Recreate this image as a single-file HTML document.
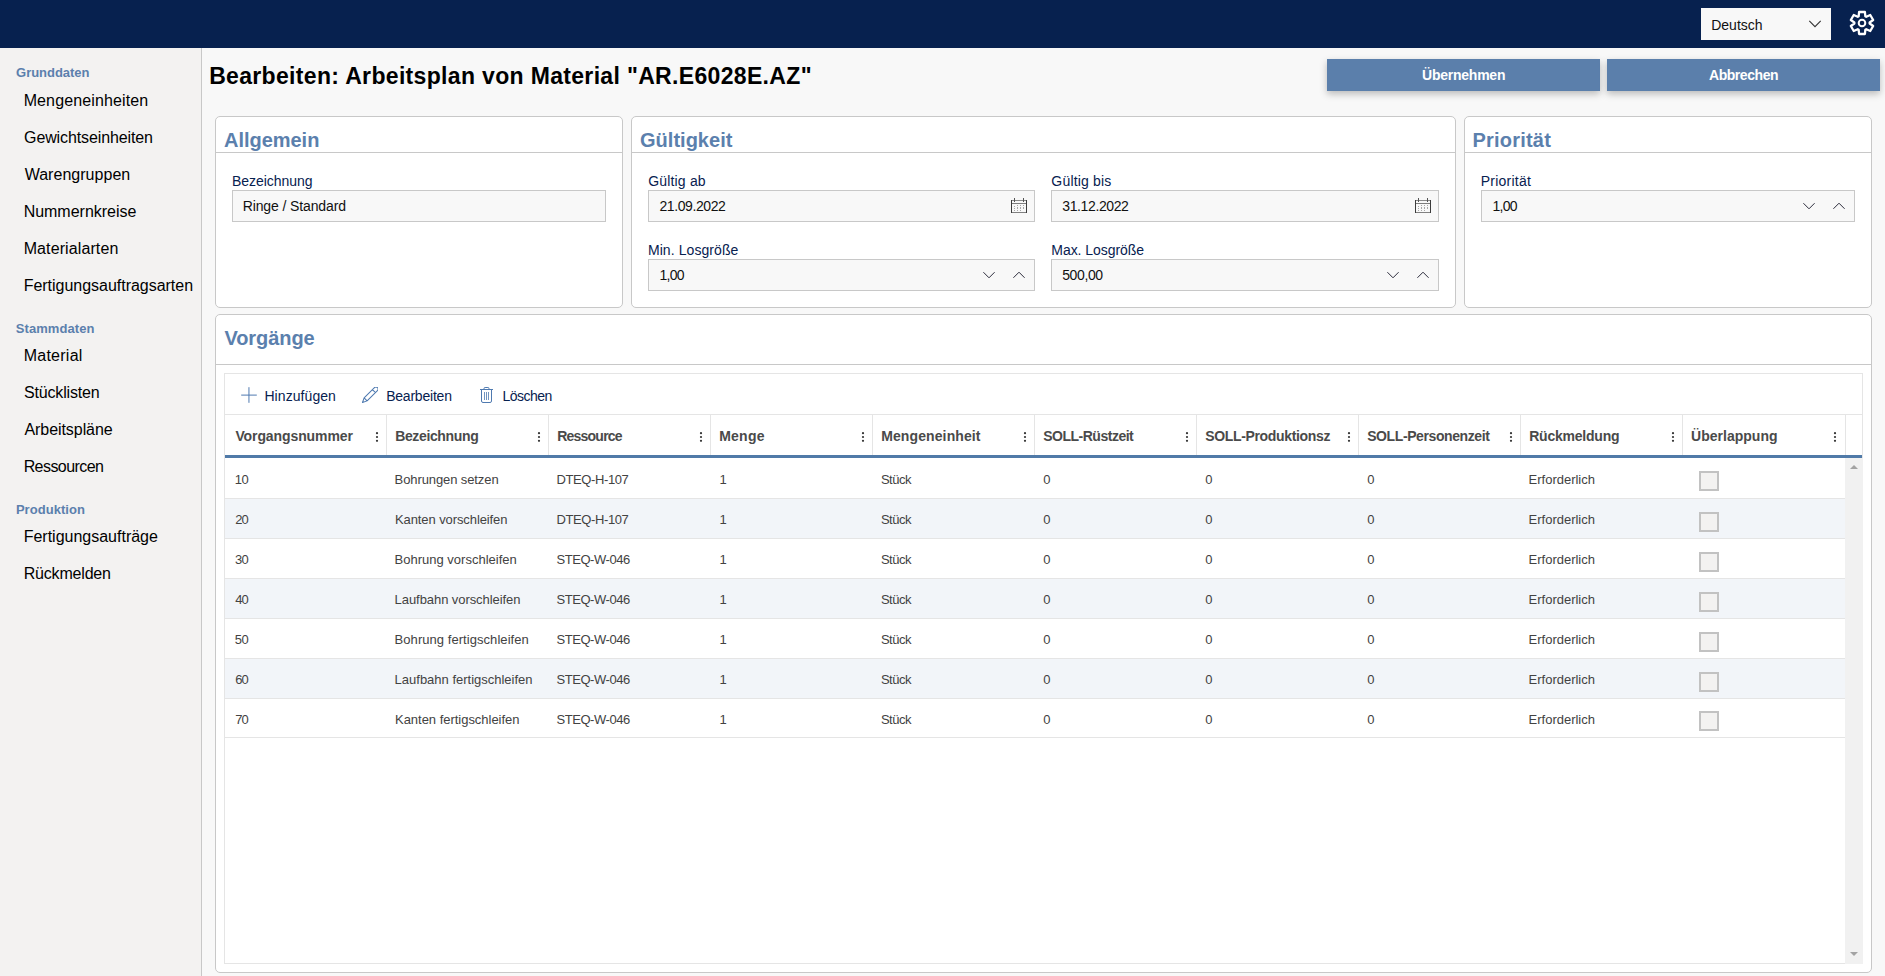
<!DOCTYPE html>
<html lang="de"><head><meta charset="utf-8"><title>Bearbeiten: Arbeitsplan</title>
<style>
html,body{margin:0;padding:0}
body{width:1885px;height:976px;overflow:hidden;position:relative;background:#f8f8f8;font-family:"Liberation Sans",Arial,sans-serif;}
.t{position:absolute;white-space:nowrap;line-height:1;}
</style></head><body>
<div style="position:absolute;left:0px;top:0px;width:1885px;height:48px;background:#07214f;"></div>
<div style="position:absolute;left:1701px;top:8px;width:130px;height:32px;background:#f8f8f8;"></div>
<svg style="position:absolute;left:1808px;top:19px" width="14" height="10" viewBox="0 0 14 10"><path d="M1.3 1.9 L7 7.7 L12.7 1.9" fill="none" stroke="#333" stroke-width="1.1"/></svg>
<svg style="position:absolute;left:1862.2px;top:23px;overflow:visible" width="1" height="1"><path d="M3.35 -6.74 L2.91 -11.00 L-2.91 -11.00 L-3.35 -6.74 A7.65 7.50 0 0 0 -4.28 -6.22 L-8.26 -7.97 L-11.17 -3.03 L-7.63 -0.52 A7.65 7.50 0 0 0 -7.63 0.52 L-11.17 3.03 L-8.26 7.97 L-4.28 6.22 A7.65 7.50 0 0 0 -3.35 6.74 L-2.91 11.00 L2.91 11.00 L3.35 6.74 A7.65 7.50 0 0 0 4.28 6.22 L8.26 7.97 L11.17 3.03 L7.63 0.52 A7.65 7.50 0 0 0 7.63 -0.52 L11.17 -3.03 L8.26 -7.97 L4.28 -6.22 A7.65 7.50 0 0 0 3.35 -6.74Z" fill="none" stroke="#fff" stroke-width="2.3" stroke-linejoin="round"/><circle cx="0" cy="0" r="3.3" fill="none" stroke="#fff" stroke-width="2"/></svg>
<div style="position:absolute;left:0px;top:48px;width:201px;height:928px;background:#f3f2f1;border-right:1px solid #c8c8c8;"></div>
<div style="position:absolute;left:1327px;top:59px;width:273px;height:32px;background:#5b7fab;box-shadow:0 3px 7px rgba(0,0,0,.25);"></div>
<div style="position:absolute;left:1607px;top:59px;width:273px;height:32px;background:#5b7fab;box-shadow:0 3px 7px rgba(0,0,0,.25);"></div>
<div style="position:absolute;left:215px;top:116px;width:408px;height:192px;box-sizing:border-box;background:#fff;border:1px solid #c8c8c8;border-radius:5px;"><div style="position:absolute;left:0px;top:35px;width:406px;height:1px;background:#c8c8c8;"></div></div>
<div style="position:absolute;left:631px;top:116px;width:825px;height:192px;box-sizing:border-box;background:#fff;border:1px solid #c8c8c8;border-radius:5px;"><div style="position:absolute;left:0px;top:35px;width:823px;height:1px;background:#c8c8c8;"></div></div>
<div style="position:absolute;left:1464px;top:116px;width:408px;height:192px;box-sizing:border-box;background:#fff;border:1px solid #c8c8c8;border-radius:5px;"><div style="position:absolute;left:0px;top:35px;width:406px;height:1px;background:#c8c8c8;"></div></div>
<div style="position:absolute;left:215px;top:314px;width:1657px;height:659px;box-sizing:border-box;background:#fff;border:1px solid #c8c8c8;border-radius:5px;"><div style="position:absolute;left:0px;top:49px;width:1655px;height:1px;background:#c8c8c8;"></div></div>
<div style="position:absolute;left:232px;top:190px;width:374px;height:32px;box-sizing:border-box;background:#f8f8f8;border:1px solid #c8c8c8;"></div>
<div style="position:absolute;left:648px;top:190px;width:387px;height:32px;box-sizing:border-box;background:#f8f8f8;border:1px solid #c8c8c8;"></div>
<svg style="position:absolute;left:1011px;top:198px" width="16" height="16" viewBox="0 0 16 16" shape-rendering="crispEdges"><rect x="0" y="2" width="16" height="1" fill="#8a8a8a"/><rect x="0" y="5" width="16" height="1" fill="#7c7c7c"/><rect x="0" y="14" width="16" height="1" fill="#808080"/><rect x="0" y="2" width="1" height="13" fill="#3c3c3c"/><rect x="15" y="2" width="1" height="13" fill="#3c3c3c"/><rect x="3" y="0.4" width="1" height="3.2" fill="#555"/><rect x="12" y="0.4" width="1" height="3.2" fill="#555"/><g fill="#a8a8a8"><rect x="3" y="8" width="1" height="1"/><rect x="3" y="10" width="1" height="1"/><rect x="3" y="12" width="1" height="1"/><rect x="6" y="7" width="1" height="1"/><rect x="6" y="8.5" width="1" height="1"/><rect x="6" y="10" width="1" height="1"/><rect x="6" y="12" width="1" height="1"/><rect x="9" y="7" width="1" height="1"/><rect x="9" y="8.5" width="1" height="1"/><rect x="9" y="10" width="1" height="1"/><rect x="9" y="12" width="1" height="1"/><rect x="12" y="7" width="1" height="1"/><rect x="12" y="8.5" width="1" height="1"/><rect x="12" y="10" width="1" height="1"/></g></svg>
<div style="position:absolute;left:1051px;top:190px;width:388px;height:32px;box-sizing:border-box;background:#f8f8f8;border:1px solid #c8c8c8;"></div>
<svg style="position:absolute;left:1415px;top:198px" width="16" height="16" viewBox="0 0 16 16" shape-rendering="crispEdges"><rect x="0" y="2" width="16" height="1" fill="#8a8a8a"/><rect x="0" y="5" width="16" height="1" fill="#7c7c7c"/><rect x="0" y="14" width="16" height="1" fill="#808080"/><rect x="0" y="2" width="1" height="13" fill="#3c3c3c"/><rect x="15" y="2" width="1" height="13" fill="#3c3c3c"/><rect x="3" y="0.4" width="1" height="3.2" fill="#555"/><rect x="12" y="0.4" width="1" height="3.2" fill="#555"/><g fill="#a8a8a8"><rect x="3" y="8" width="1" height="1"/><rect x="3" y="10" width="1" height="1"/><rect x="3" y="12" width="1" height="1"/><rect x="6" y="7" width="1" height="1"/><rect x="6" y="8.5" width="1" height="1"/><rect x="6" y="10" width="1" height="1"/><rect x="6" y="12" width="1" height="1"/><rect x="9" y="7" width="1" height="1"/><rect x="9" y="8.5" width="1" height="1"/><rect x="9" y="10" width="1" height="1"/><rect x="9" y="12" width="1" height="1"/><rect x="12" y="7" width="1" height="1"/><rect x="12" y="8.5" width="1" height="1"/><rect x="12" y="10" width="1" height="1"/></g></svg>
<div style="position:absolute;left:648px;top:259px;width:387px;height:32px;box-sizing:border-box;background:#f8f8f8;border:1px solid #c8c8c8;"></div>
<svg style="position:absolute;left:988.8px;top:275px;overflow:visible" width="1" height="1"><path d="M-5.6 -2.8 L0 2.8 L5.6 -2.8" fill="none" stroke="#2c2c3c" stroke-width="1"/></svg>
<svg style="position:absolute;left:1018.8px;top:275px;overflow:visible" width="1" height="1"><path d="M-5.6 2.8 L0 -2.8 L5.6 2.8" fill="none" stroke="#2c2c3c" stroke-width="1"/></svg>
<div style="position:absolute;left:1051px;top:259px;width:388px;height:32px;box-sizing:border-box;background:#f8f8f8;border:1px solid #c8c8c8;"></div>
<svg style="position:absolute;left:1393.25px;top:275px;overflow:visible" width="1" height="1"><path d="M-5.6 -2.8 L0 2.8 L5.6 -2.8" fill="none" stroke="#2c2c3c" stroke-width="1"/></svg>
<svg style="position:absolute;left:1423.25px;top:275px;overflow:visible" width="1" height="1"><path d="M-5.6 2.8 L0 -2.8 L5.6 2.8" fill="none" stroke="#2c2c3c" stroke-width="1"/></svg>
<div style="position:absolute;left:1481px;top:190px;width:374px;height:32px;box-sizing:border-box;background:#f8f8f8;border:1px solid #c8c8c8;"></div>
<svg style="position:absolute;left:1809.35px;top:206px;overflow:visible" width="1" height="1"><path d="M-5.6 -2.8 L0 2.8 L5.6 -2.8" fill="none" stroke="#2c2c3c" stroke-width="1"/></svg>
<svg style="position:absolute;left:1839.35px;top:206px;overflow:visible" width="1" height="1"><path d="M-5.6 2.8 L0 -2.8 L5.6 2.8" fill="none" stroke="#2c2c3c" stroke-width="1"/></svg>
<div style="position:absolute;left:224px;top:373px;width:1639px;height:591px;box-sizing:border-box;background:#fff;border:1px solid #e5e5e5;"></div>
<div style="position:absolute;left:225px;top:414px;width:1637px;height:1px;background:#e5e5e5;"></div>
<div style="position:absolute;left:225px;top:455px;width:1637px;height:3px;background:#507aa8;"></div>
<div style="position:absolute;left:386px;top:415px;width:1px;height:40px;background:#e5e5e5;"></div>
<svg style="position:absolute;left:374.8px;top:432px" width="4" height="10" viewBox="0 0 4 10"><circle cx="2" cy="1.2" r="1.1" fill="#333"/><circle cx="2" cy="5" r="1.1" fill="#333"/><circle cx="2" cy="8.8" r="1.1" fill="#333"/></svg>
<div style="position:absolute;left:548px;top:415px;width:1px;height:40px;background:#e5e5e5;"></div>
<svg style="position:absolute;left:536.8px;top:432px" width="4" height="10" viewBox="0 0 4 10"><circle cx="2" cy="1.2" r="1.1" fill="#333"/><circle cx="2" cy="5" r="1.1" fill="#333"/><circle cx="2" cy="8.8" r="1.1" fill="#333"/></svg>
<div style="position:absolute;left:710px;top:415px;width:1px;height:40px;background:#e5e5e5;"></div>
<svg style="position:absolute;left:698.8px;top:432px" width="4" height="10" viewBox="0 0 4 10"><circle cx="2" cy="1.2" r="1.1" fill="#333"/><circle cx="2" cy="5" r="1.1" fill="#333"/><circle cx="2" cy="8.8" r="1.1" fill="#333"/></svg>
<div style="position:absolute;left:872px;top:415px;width:1px;height:40px;background:#e5e5e5;"></div>
<svg style="position:absolute;left:860.8px;top:432px" width="4" height="10" viewBox="0 0 4 10"><circle cx="2" cy="1.2" r="1.1" fill="#333"/><circle cx="2" cy="5" r="1.1" fill="#333"/><circle cx="2" cy="8.8" r="1.1" fill="#333"/></svg>
<div style="position:absolute;left:1034px;top:415px;width:1px;height:40px;background:#e5e5e5;"></div>
<svg style="position:absolute;left:1022.8px;top:432px" width="4" height="10" viewBox="0 0 4 10"><circle cx="2" cy="1.2" r="1.1" fill="#333"/><circle cx="2" cy="5" r="1.1" fill="#333"/><circle cx="2" cy="8.8" r="1.1" fill="#333"/></svg>
<div style="position:absolute;left:1196px;top:415px;width:1px;height:40px;background:#e5e5e5;"></div>
<svg style="position:absolute;left:1184.8px;top:432px" width="4" height="10" viewBox="0 0 4 10"><circle cx="2" cy="1.2" r="1.1" fill="#333"/><circle cx="2" cy="5" r="1.1" fill="#333"/><circle cx="2" cy="8.8" r="1.1" fill="#333"/></svg>
<div style="position:absolute;left:1358px;top:415px;width:1px;height:40px;background:#e5e5e5;"></div>
<svg style="position:absolute;left:1346.8px;top:432px" width="4" height="10" viewBox="0 0 4 10"><circle cx="2" cy="1.2" r="1.1" fill="#333"/><circle cx="2" cy="5" r="1.1" fill="#333"/><circle cx="2" cy="8.8" r="1.1" fill="#333"/></svg>
<div style="position:absolute;left:1520px;top:415px;width:1px;height:40px;background:#e5e5e5;"></div>
<svg style="position:absolute;left:1508.8px;top:432px" width="4" height="10" viewBox="0 0 4 10"><circle cx="2" cy="1.2" r="1.1" fill="#333"/><circle cx="2" cy="5" r="1.1" fill="#333"/><circle cx="2" cy="8.8" r="1.1" fill="#333"/></svg>
<div style="position:absolute;left:1682px;top:415px;width:1px;height:40px;background:#e5e5e5;"></div>
<svg style="position:absolute;left:1670.8px;top:432px" width="4" height="10" viewBox="0 0 4 10"><circle cx="2" cy="1.2" r="1.1" fill="#333"/><circle cx="2" cy="5" r="1.1" fill="#333"/><circle cx="2" cy="8.8" r="1.1" fill="#333"/></svg>
<div style="position:absolute;left:1845px;top:415px;width:1px;height:40px;background:#e5e5e5;"></div>
<svg style="position:absolute;left:1832.8px;top:432px" width="4" height="10" viewBox="0 0 4 10"><circle cx="2" cy="1.2" r="1.1" fill="#333"/><circle cx="2" cy="5" r="1.1" fill="#333"/><circle cx="2" cy="8.8" r="1.1" fill="#333"/></svg>
<div style="position:absolute;left:225px;top:458px;width:1620px;height:41px;box-sizing:border-box;background:#fff;border-bottom:1px solid #e5e5e5;"></div>
<div style="position:absolute;left:1699px;top:471px;width:20px;height:20px;box-sizing:border-box;background:#f3f2f1;border:2px solid #c2c2c2;"></div>
<div style="position:absolute;left:225px;top:499px;width:1620px;height:40px;box-sizing:border-box;background:#f2f5f9;border-bottom:1px solid #e5e5e5;"></div>
<div style="position:absolute;left:1699px;top:512px;width:20px;height:20px;box-sizing:border-box;background:#f3f2f1;border:2px solid #c2c2c2;"></div>
<div style="position:absolute;left:225px;top:539px;width:1620px;height:40px;box-sizing:border-box;background:#fff;border-bottom:1px solid #e5e5e5;"></div>
<div style="position:absolute;left:1699px;top:552px;width:20px;height:20px;box-sizing:border-box;background:#f3f2f1;border:2px solid #c2c2c2;"></div>
<div style="position:absolute;left:225px;top:579px;width:1620px;height:40px;box-sizing:border-box;background:#f2f5f9;border-bottom:1px solid #e5e5e5;"></div>
<div style="position:absolute;left:1699px;top:592px;width:20px;height:20px;box-sizing:border-box;background:#f3f2f1;border:2px solid #c2c2c2;"></div>
<div style="position:absolute;left:225px;top:619px;width:1620px;height:40px;box-sizing:border-box;background:#fff;border-bottom:1px solid #e5e5e5;"></div>
<div style="position:absolute;left:1699px;top:632px;width:20px;height:20px;box-sizing:border-box;background:#f3f2f1;border:2px solid #c2c2c2;"></div>
<div style="position:absolute;left:225px;top:659px;width:1620px;height:40px;box-sizing:border-box;background:#f2f5f9;border-bottom:1px solid #e5e5e5;"></div>
<div style="position:absolute;left:1699px;top:672px;width:20px;height:20px;box-sizing:border-box;background:#f3f2f1;border:2px solid #c2c2c2;"></div>
<div style="position:absolute;left:225px;top:699px;width:1620px;height:39px;box-sizing:border-box;background:#fff;border-bottom:1px solid #e5e5e5;"></div>
<div style="position:absolute;left:1699px;top:711px;width:20px;height:20px;box-sizing:border-box;background:#f3f2f1;border:2px solid #c2c2c2;"></div>
<div style="position:absolute;left:1845px;top:458px;width:18px;height:506px;background:#f1f1f1;"></div>
<svg style="position:absolute;left:1849px;top:464px" width="10" height="6" viewBox="0 0 10 6"><path d="M1 5 L5 1 L9 5z" fill="#a3a3a3"/></svg>
<svg style="position:absolute;left:1849px;top:951px" width="10" height="6" viewBox="0 0 10 6"><path d="M1 1 L5 5 L9 1z" fill="#a3a3a3"/></svg>
<svg style="position:absolute;left:241px;top:387px" width="16" height="16" viewBox="0 0 16 16"><path d="M7.95 0.2v15.6M0.2 8.1h15.6" stroke="#4f7ab0" stroke-width="1" fill="none"/></svg>
<svg style="position:absolute;left:362px;top:387px" width="16" height="16" viewBox="0 0 16 16" fill="none" stroke="#4f7ab0" stroke-width="1.05"><g transform="translate(0.5,15.5) rotate(-45)"><path d="M0 0 L4.4 -2.1 H19 A2.1 2.1 0 0 1 19 2.1 H4.4 Z M4.4 -2.1 V2.1 M16.2 -2.1 V2.1" stroke-linejoin="round"/></g></svg>
<svg style="position:absolute;left:478px;top:387px" width="16" height="16" viewBox="0 0 16 16" fill="none" stroke="#4f7ab0" stroke-width="1"><path d="M2 2.5H15M6 2.5V1.6a1.1 1.1 0 0 1 1.1-1.1h2.8a1.1 1.1 0 0 1 1.1 1.1V2.5M3.5 2.5V14a1.5 1.5 0 0 0 1.5 1.5h7a1.5 1.5 0 0 0 1.5-1.5V2.5"/><path d="M6.5 5v8M8.5 5v8M10.5 5v8" stroke-opacity=".8"/></svg>
<span class="t" id="deutsch" style="left:1711.25px;top:18.15px;font-size:14px;color:#111;letter-spacing:-0.013px;">Deutsch</span>
<span class="t" id="g1" style="left:16.10px;top:66.30px;font-size:13px;color:#5b80ad;font-weight:700;letter-spacing:-0.039px;">Grunddaten</span>
<span class="t" id="s1_0" style="left:23.65px;top:93.06px;font-size:16px;color:#000;letter-spacing:0.123px;">Mengeneinheiten</span>
<span class="t" id="s1_1" style="left:24.08px;top:130.06px;font-size:16px;color:#000;letter-spacing:-0.120px;">Gewichtseinheiten</span>
<span class="t" id="s1_2" style="left:24.66px;top:167.06px;font-size:16px;color:#000;letter-spacing:0.027px;">Warengruppen</span>
<span class="t" id="s1_3" style="left:23.65px;top:204.06px;font-size:16px;color:#000;letter-spacing:-0.016px;">Nummernkreise</span>
<span class="t" id="s1_4" style="left:23.65px;top:241.06px;font-size:16px;color:#000;letter-spacing:0.108px;">Materialarten</span>
<span class="t" id="s1_5" style="left:23.65px;top:278.06px;font-size:16px;color:#000;letter-spacing:-0.021px;">Fertigungsauftragsarten</span>
<span class="t" id="g2" style="left:15.82px;top:322.00px;font-size:13px;color:#5b80ad;font-weight:700;letter-spacing:0.068px;">Stammdaten</span>
<span class="t" id="s2_0" style="left:23.65px;top:348.06px;font-size:16px;color:#000;letter-spacing:0.266px;">Material</span>
<span class="t" id="s2_1" style="left:24.00px;top:385.06px;font-size:16px;color:#000;letter-spacing:-0.169px;">Stücklisten</span>
<span class="t" id="s2_2" style="left:24.44px;top:422.06px;font-size:16px;color:#000;letter-spacing:-0.063px;">Arbeitspläne</span>
<span class="t" id="s2_3" style="left:23.65px;top:459.06px;font-size:16px;color:#000;letter-spacing:-0.572px;">Ressourcen</span>
<span class="t" id="g3" style="left:15.88px;top:502.50px;font-size:13px;color:#5b80ad;font-weight:700;letter-spacing:0.052px;">Produktion</span>
<span class="t" id="s3_0" style="left:23.65px;top:529.16px;font-size:16px;color:#000;letter-spacing:-0.003px;">Fertigungsaufträge</span>
<span class="t" id="s3_1" style="left:23.65px;top:566.16px;font-size:16px;color:#000;letter-spacing:-0.175px;">Rückmelden</span>
<span class="t" id="title" style="left:209.15px;top:65.23px;font-size:23px;color:#000;font-weight:700;letter-spacing:0.330px;">Bearbeiten: Arbeitsplan von Material "AR.E6028E.AZ"</span>
<span class="t" id="btn1" style="left:1422.07px;top:68.15px;font-size:14px;color:#fff;font-weight:700;letter-spacing:-0.243px;">Übernehmen</span>
<span class="t" id="btn2" style="left:1708.98px;top:68.15px;font-size:14px;color:#fff;font-weight:700;letter-spacing:-0.442px;">Abbrechen</span>
<span class="t" id="h_allg" style="left:223.97px;top:130.07px;font-size:20px;color:#5b80ad;font-weight:700;letter-spacing:-0.023px;">Allgemein</span>
<span class="t" id="h_guel" style="left:640.03px;top:130.07px;font-size:20px;color:#5b80ad;font-weight:700;letter-spacing:0.014px;">Gültigkeit</span>
<span class="t" id="h_prio" style="left:1472.41px;top:130.07px;font-size:20px;color:#5b80ad;font-weight:700;letter-spacing:0.214px;">Priorität</span>
<span class="t" id="h_vorg" style="left:224.42px;top:328.17px;font-size:20px;color:#5b80ad;font-weight:700;letter-spacing:-0.067px;">Vorgänge</span>
<span class="t" id="l_bez" style="left:231.91px;top:173.95px;font-size:14px;color:#07214f;letter-spacing:-0.041px;">Bezeichnung</span>
<span class="t" id="v_bez" style="left:242.66px;top:198.95px;font-size:14px;color:#111;letter-spacing:-0.115px;">Ringe / Standard</span>
<span class="t" id="l_gab" style="left:648.28px;top:173.95px;font-size:14px;color:#07214f;letter-spacing:0.164px;">Gültig ab</span>
<span class="t" id="v_gab" style="left:659.43px;top:198.95px;font-size:14px;color:#111;letter-spacing:-0.408px;">21.09.2022</span>
<span class="t" id="l_gbis" style="left:1051.37px;top:173.95px;font-size:14px;color:#07214f;letter-spacing:0.170px;">Gültig bis</span>
<span class="t" id="v_gbis" style="left:1062.30px;top:198.95px;font-size:14px;color:#111;letter-spacing:-0.390px;">31.12.2022</span>
<span class="t" id="l_min" style="left:647.91px;top:242.95px;font-size:14px;color:#07214f;letter-spacing:0.080px;">Min. Losgröße</span>
<span class="t" id="v_min" style="left:659.48px;top:267.95px;font-size:14px;color:#111;letter-spacing:-0.699px;">1,00</span>
<span class="t" id="l_max" style="left:1051.33px;top:242.95px;font-size:14px;color:#07214f;letter-spacing:-0.059px;">Max. Losgröße</span>
<span class="t" id="v_max" style="left:1062.21px;top:267.95px;font-size:14px;color:#111;letter-spacing:-0.391px;">500,00</span>
<span class="t" id="l_prio" style="left:1480.66px;top:173.95px;font-size:14px;color:#07214f;letter-spacing:0.252px;">Priorität</span>
<span class="t" id="v_prio" style="left:1492.48px;top:198.95px;font-size:14px;color:#111;letter-spacing:-0.699px;">1,00</span>
<span class="t" id="tb1" style="left:264.42px;top:388.75px;font-size:14px;color:#07214f;letter-spacing:0.075px;">Hinzufügen</span>
<span class="t" id="tb2" style="left:386.15px;top:388.75px;font-size:14px;color:#07214f;letter-spacing:-0.210px;">Bearbeiten</span>
<span class="t" id="tb3" style="left:502.51px;top:388.75px;font-size:14px;color:#07214f;letter-spacing:-0.517px;">Löschen</span>
<span class="t" id="th0" style="left:235.42px;top:429.05px;font-size:14px;color:#4a4a4a;font-weight:700;letter-spacing:-0.100px;">Vorgangsnummer</span>
<span class="t" id="th1" style="left:395.17px;top:429.05px;font-size:14px;color:#4a4a4a;font-weight:700;letter-spacing:-0.357px;">Bezeichnung</span>
<span class="t" id="th2" style="left:557.17px;top:429.05px;font-size:14px;color:#4a4a4a;font-weight:700;letter-spacing:-0.765px;">Ressource</span>
<span class="t" id="th3" style="left:719.17px;top:429.05px;font-size:14px;color:#4a4a4a;font-weight:700;letter-spacing:0.251px;">Menge</span>
<span class="t" id="th4" style="left:881.17px;top:429.05px;font-size:14px;color:#4a4a4a;font-weight:700;letter-spacing:0.113px;">Mengeneinheit</span>
<span class="t" id="th5" style="left:1043.20px;top:429.05px;font-size:14px;color:#4a4a4a;font-weight:700;letter-spacing:-0.489px;">SOLL-Rüstzeit</span>
<span class="t" id="th6" style="left:1205.20px;top:429.05px;font-size:14px;color:#4a4a4a;font-weight:700;letter-spacing:-0.335px;">SOLL-Produktionsz</span>
<span class="t" id="th7" style="left:1367.20px;top:429.05px;font-size:14px;color:#4a4a4a;font-weight:700;letter-spacing:-0.403px;">SOLL-Personenzeit</span>
<span class="t" id="th8" style="left:1529.17px;top:429.05px;font-size:14px;color:#4a4a4a;font-weight:700;letter-spacing:-0.215px;">Rückmeldung</span>
<span class="t" id="th9" style="left:1691.03px;top:429.05px;font-size:14px;color:#4a4a4a;font-weight:700;letter-spacing:0.020px;">Überlappung</span>
<span class="t" id="r0c0" style="left:234.79px;top:472.70px;font-size:13px;color:#424242;letter-spacing:-0.578px;">10</span>
<span class="t" id="r0c1" style="left:394.62px;top:472.70px;font-size:13px;color:#424242;letter-spacing:-0.100px;">Bohrungen setzen</span>
<span class="t" id="r0c2" style="left:556.45px;top:472.70px;font-size:13px;color:#424242;letter-spacing:-0.384px;">DTEQ-H-107</span>
<span class="t" id="r0c3" style="left:719.45px;top:472.70px;font-size:13px;color:#424242;">1</span>
<span class="t" id="r0c4" style="left:880.91px;top:472.70px;font-size:13px;color:#424242;letter-spacing:-0.507px;">Stück</span>
<span class="t" id="r0c5" style="left:1043.21px;top:472.70px;font-size:13px;color:#424242;">0</span>
<span class="t" id="r0c6" style="left:1205.21px;top:472.70px;font-size:13px;color:#424242;">0</span>
<span class="t" id="r0c7" style="left:1367.21px;top:472.70px;font-size:13px;color:#424242;">0</span>
<span class="t" id="r0c8" style="left:1528.62px;top:472.70px;font-size:13px;color:#424242;letter-spacing:-0.011px;">Erforderlich</span>
<span class="t" id="r1c0" style="left:235.37px;top:512.70px;font-size:13px;color:#424242;letter-spacing:-1.146px;">20</span>
<span class="t" id="r1c1" style="left:395.01px;top:512.70px;font-size:13px;color:#424242;letter-spacing:-0.094px;">Kanten vorschleifen</span>
<span class="t" id="r1c2" style="left:556.45px;top:512.70px;font-size:13px;color:#424242;letter-spacing:-0.384px;">DTEQ-H-107</span>
<span class="t" id="r1c3" style="left:719.45px;top:512.70px;font-size:13px;color:#424242;">1</span>
<span class="t" id="r1c4" style="left:880.91px;top:512.70px;font-size:13px;color:#424242;letter-spacing:-0.507px;">Stück</span>
<span class="t" id="r1c5" style="left:1043.21px;top:512.70px;font-size:13px;color:#424242;">0</span>
<span class="t" id="r1c6" style="left:1205.21px;top:512.70px;font-size:13px;color:#424242;">0</span>
<span class="t" id="r1c7" style="left:1367.21px;top:512.70px;font-size:13px;color:#424242;">0</span>
<span class="t" id="r1c8" style="left:1528.62px;top:512.70px;font-size:13px;color:#424242;letter-spacing:-0.011px;">Erforderlich</span>
<span class="t" id="r2c0" style="left:234.98px;top:552.70px;font-size:13px;color:#424242;letter-spacing:-0.778px;">30</span>
<span class="t" id="r2c1" style="left:394.62px;top:552.70px;font-size:13px;color:#424242;letter-spacing:-0.002px;">Bohrung vorschleifen</span>
<span class="t" id="r2c2" style="left:556.61px;top:552.70px;font-size:13px;color:#424242;letter-spacing:-0.470px;">STEQ-W-046</span>
<span class="t" id="r2c3" style="left:719.45px;top:552.70px;font-size:13px;color:#424242;">1</span>
<span class="t" id="r2c4" style="left:880.91px;top:552.70px;font-size:13px;color:#424242;letter-spacing:-0.507px;">Stück</span>
<span class="t" id="r2c5" style="left:1043.21px;top:552.70px;font-size:13px;color:#424242;">0</span>
<span class="t" id="r2c6" style="left:1205.21px;top:552.70px;font-size:13px;color:#424242;">0</span>
<span class="t" id="r2c7" style="left:1367.21px;top:552.70px;font-size:13px;color:#424242;">0</span>
<span class="t" id="r2c8" style="left:1528.62px;top:552.70px;font-size:13px;color:#424242;letter-spacing:-0.011px;">Erforderlich</span>
<span class="t" id="r3c0" style="left:235.33px;top:592.70px;font-size:13px;color:#424242;letter-spacing:-1.129px;">40</span>
<span class="t" id="r3c1" style="left:394.62px;top:592.70px;font-size:13px;color:#424242;letter-spacing:-0.068px;">Laufbahn vorschleifen</span>
<span class="t" id="r3c2" style="left:556.61px;top:592.70px;font-size:13px;color:#424242;letter-spacing:-0.470px;">STEQ-W-046</span>
<span class="t" id="r3c3" style="left:719.45px;top:592.70px;font-size:13px;color:#424242;">1</span>
<span class="t" id="r3c4" style="left:880.91px;top:592.70px;font-size:13px;color:#424242;letter-spacing:-0.507px;">Stück</span>
<span class="t" id="r3c5" style="left:1043.21px;top:592.70px;font-size:13px;color:#424242;">0</span>
<span class="t" id="r3c6" style="left:1205.21px;top:592.70px;font-size:13px;color:#424242;">0</span>
<span class="t" id="r3c7" style="left:1367.21px;top:592.70px;font-size:13px;color:#424242;">0</span>
<span class="t" id="r3c8" style="left:1528.62px;top:592.70px;font-size:13px;color:#424242;letter-spacing:-0.011px;">Erforderlich</span>
<span class="t" id="r4c0" style="left:234.83px;top:632.70px;font-size:13px;color:#424242;letter-spacing:-0.613px;">50</span>
<span class="t" id="r4c1" style="left:394.62px;top:632.70px;font-size:13px;color:#424242;letter-spacing:0.053px;">Bohrung fertigschleifen</span>
<span class="t" id="r4c2" style="left:556.61px;top:632.70px;font-size:13px;color:#424242;letter-spacing:-0.470px;">STEQ-W-046</span>
<span class="t" id="r4c3" style="left:719.45px;top:632.70px;font-size:13px;color:#424242;">1</span>
<span class="t" id="r4c4" style="left:880.91px;top:632.70px;font-size:13px;color:#424242;letter-spacing:-0.507px;">Stück</span>
<span class="t" id="r4c5" style="left:1043.21px;top:632.70px;font-size:13px;color:#424242;">0</span>
<span class="t" id="r4c6" style="left:1205.21px;top:632.70px;font-size:13px;color:#424242;">0</span>
<span class="t" id="r4c7" style="left:1367.21px;top:632.70px;font-size:13px;color:#424242;">0</span>
<span class="t" id="r4c8" style="left:1528.62px;top:632.70px;font-size:13px;color:#424242;letter-spacing:-0.011px;">Erforderlich</span>
<span class="t" id="r5c0" style="left:235.17px;top:672.70px;font-size:13px;color:#424242;letter-spacing:-0.947px;">60</span>
<span class="t" id="r5c1" style="left:394.62px;top:672.70px;font-size:13px;color:#424242;letter-spacing:-0.005px;">Laufbahn fertigschleifen</span>
<span class="t" id="r5c2" style="left:556.61px;top:672.70px;font-size:13px;color:#424242;letter-spacing:-0.470px;">STEQ-W-046</span>
<span class="t" id="r5c3" style="left:719.45px;top:672.70px;font-size:13px;color:#424242;">1</span>
<span class="t" id="r5c4" style="left:880.91px;top:672.70px;font-size:13px;color:#424242;letter-spacing:-0.507px;">Stück</span>
<span class="t" id="r5c5" style="left:1043.21px;top:672.70px;font-size:13px;color:#424242;">0</span>
<span class="t" id="r5c6" style="left:1205.21px;top:672.70px;font-size:13px;color:#424242;">0</span>
<span class="t" id="r5c7" style="left:1367.21px;top:672.70px;font-size:13px;color:#424242;">0</span>
<span class="t" id="r5c8" style="left:1528.62px;top:672.70px;font-size:13px;color:#424242;letter-spacing:-0.011px;">Erforderlich</span>
<span class="t" id="r6c0" style="left:235.37px;top:712.70px;font-size:13px;color:#424242;letter-spacing:-1.146px;">70</span>
<span class="t" id="r6c1" style="left:395.01px;top:712.70px;font-size:13px;color:#424242;letter-spacing:-0.025px;">Kanten fertigschleifen</span>
<span class="t" id="r6c2" style="left:556.61px;top:712.70px;font-size:13px;color:#424242;letter-spacing:-0.470px;">STEQ-W-046</span>
<span class="t" id="r6c3" style="left:719.45px;top:712.70px;font-size:13px;color:#424242;">1</span>
<span class="t" id="r6c4" style="left:880.91px;top:712.70px;font-size:13px;color:#424242;letter-spacing:-0.507px;">Stück</span>
<span class="t" id="r6c5" style="left:1043.21px;top:712.70px;font-size:13px;color:#424242;">0</span>
<span class="t" id="r6c6" style="left:1205.21px;top:712.70px;font-size:13px;color:#424242;">0</span>
<span class="t" id="r6c7" style="left:1367.21px;top:712.70px;font-size:13px;color:#424242;">0</span>
<span class="t" id="r6c8" style="left:1528.62px;top:712.70px;font-size:13px;color:#424242;letter-spacing:-0.011px;">Erforderlich</span>
</body></html>
